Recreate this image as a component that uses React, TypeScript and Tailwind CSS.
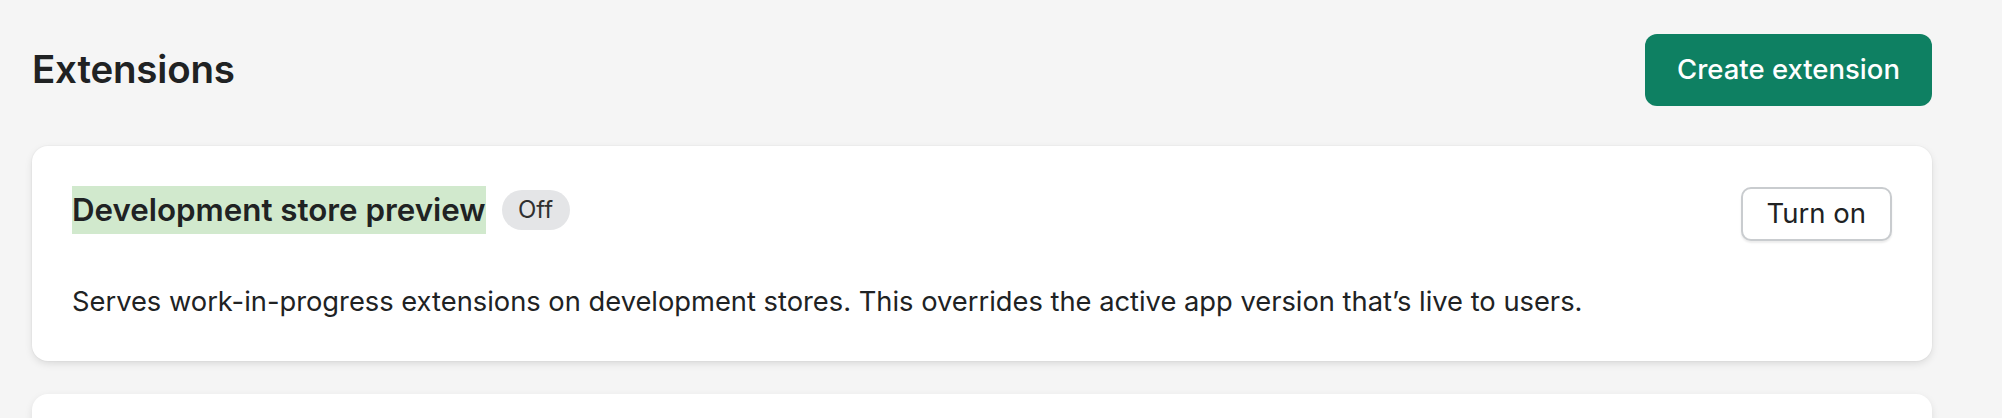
import React from 'react';

const ExtensionCard = () => {
	return (
		<div className="bg-white rounded-2xl shadow-[0_3px_8px_-1px_rgba(0,0,0,0.13),0_0_0_1px_rgba(0,0,0,0.02)] px-[40px] pt-[40px] pb-[40px]">
			<div className="flex items-start justify-between h-[55px]">
				<div className="flex items-center gap-[16px]">
					<span className="inline-block h-[48px] leading-[48px] bg-[#d1e9cd] text-[31.3px] font-semibold text-[#202223]">
						Development store preview
					</span>
					<span className="inline-flex items-center justify-center h-[40px] w-[68px] rounded-full bg-[#e4e5e7] text-[24px] text-[#303030]">
						Off
					</span>
				</div>
				<button className="mt-[1px] h-[54px] px-[24px] rounded-[10px] border-2 border-[#c9cccf] bg-white text-[27.5px] text-[#202223] shadow-[0_2px_2px_rgba(0,0,0,0.08)]">
					Turn on
				</button>
			</div>
			<p className="mt-[42px] text-[27.3px] leading-[38px] text-[#202223]">
				Serves work-in-progress extensions on development stores. This overrides the active app version that’s live to users.
			</p>
		</div>
	);
};

const App = () => {
	return (
		<div className="min-h-screen bg-[#f5f5f5] pl-[32px] pr-[70px] pt-[34px] font-['Inter','Liberation_Sans',sans-serif]">
			<header className="flex items-center justify-between h-[72px]">
				<h1 className="text-[38.5px] font-semibold text-[#202223] tracking-[-0.2px]">Extensions</h1>
				<button className="h-[72px] w-[287px] rounded-[12px] bg-[#0e8062] text-white text-[27.5px] font-medium">
					Create extension
				</button>
			</header>

			<div className="mt-[40px] flex flex-col gap-[33px]">
				<ExtensionCard />
				<div className="bg-white rounded-2xl shadow-[0_3px_8px_-1px_rgba(0,0,0,0.13)] h-[200px]" />
			</div>
		</div>
	);
};

export default App;
